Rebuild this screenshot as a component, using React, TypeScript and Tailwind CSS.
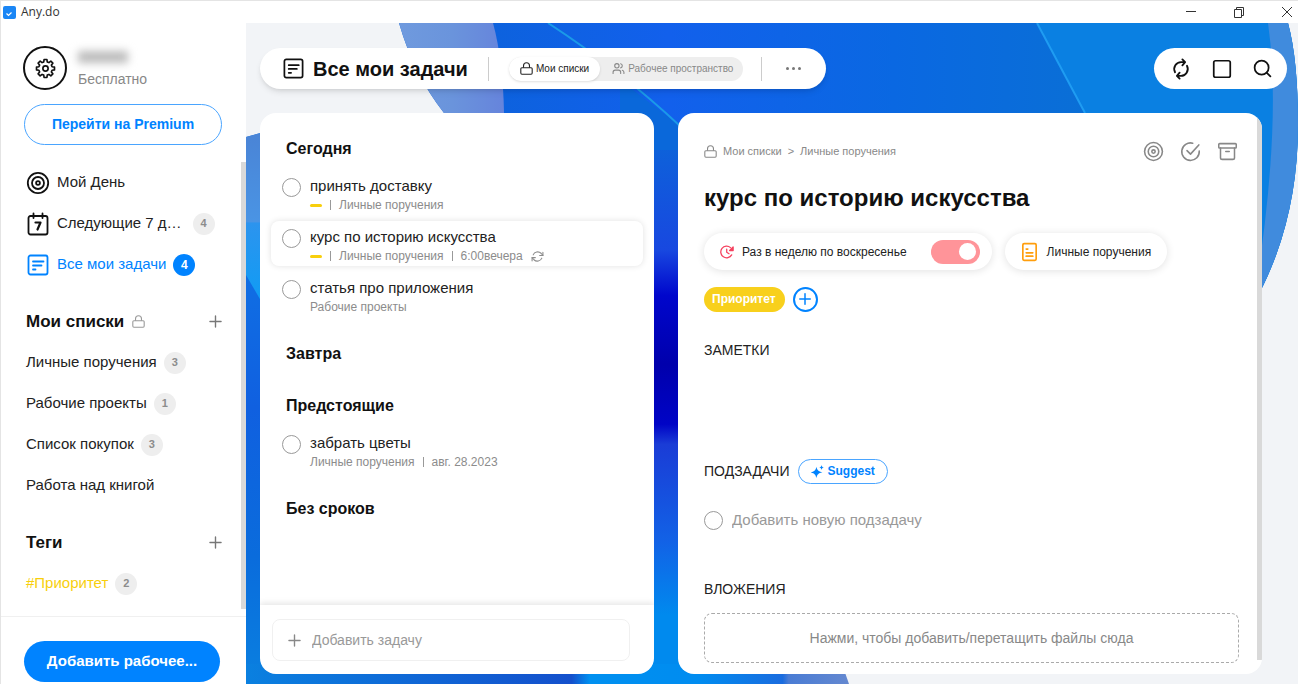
import React from "react";
import { Archive, Plus, Search, Square, Users } from "lucide-react";

type IconProps = { className?: string };

const gearOutline = Array.from({ length: 8 }, (_, tooth) => {
  const point = (radius: number, degrees: number) => {
    const angle = ((tooth * 45 + degrees) * Math.PI) / 180;
    return (12 + radius * Math.sin(angle)).toFixed(2) + "," + (12 - radius * Math.cos(angle)).toFixed(2);
  };
  return [point(7.8, -15), point(10.4, -9), point(10.4, 9), point(7.8, 15)].join(" ");
}).join(" ");

function GearIcon({ className }: IconProps) {
  return (
    <svg viewBox="0 0 24 24" className={className} fill="none" stroke="currentColor" strokeWidth="1.9" strokeLinejoin="round" aria-hidden="true">
      <polygon points={gearOutline} />
      <circle cx="12" cy="12" r="3" />
    </svg>
  );
}

function TargetIcon({ className }: IconProps) {
  return (
    <svg viewBox="0 0 24 24" className={className} fill="none" stroke="currentColor" strokeWidth="1.8" aria-hidden="true">
      <circle cx="12" cy="12" r="10.2" />
      <circle cx="12" cy="12" r="6" />
      <circle cx="12" cy="12" r="1.9" />
    </svg>
  );
}

function NoteIcon({ className }: IconProps) {
  return (
    <svg viewBox="0 0 24 24" className={className} fill="none" stroke="currentColor" strokeWidth="1.8" strokeLinecap="round" aria-hidden="true">
      <rect x="2.5" y="2.5" width="19" height="19" rx="2" />
      <path d="M7 8.500h10.500M7 12.500h8.500M7 16.500h2.500" />
    </svg>
  );
}

function SevenDaysIcon({ className }: IconProps) {
  return (
    <svg viewBox="0 0 24 24" className={className} fill="none" stroke="currentColor" strokeWidth="1.8" strokeLinecap="round" strokeLinejoin="round" aria-hidden="true">
      <rect x="2.5" y="4" width="19" height="18.5" rx="2" />
      <path d="M7.500 1.500v4.500M16.500 1.500v4.500" />
      <path d="M9.500 10.500h5l-3 7" strokeWidth="2.2" />
    </svg>
  );
}

function LockIcon({ className }: IconProps) {
  return (
    <svg viewBox="0 0 24 24" className={className} fill="none" stroke="currentColor" strokeWidth="2" strokeLinejoin="round" aria-hidden="true">
      <rect x="1.500" y="10.500" width="21" height="12" rx="2" />
      <path d="M6.500 10.500V7a5.500 5.500 0 0 1 11 0v3.500" />
    </svg>
  );
}

function SyncIcon({ className }: IconProps) {
  return (
    <svg viewBox="0 0 24 24" className={className} fill="none" stroke="currentColor" strokeWidth="2" strokeLinecap="round" strokeLinejoin="round" aria-hidden="true">
      <path d="M16 4.500h-3.500A7.500 7.500 0 0 0 5.500 15.500M13.500 1.500l3 3-3 3.500" />
      <path d="M8 19.500h3.500A7.500 7.500 0 0 0 18.500 8.500M10.500 22.500l-3-3 3-3.500" />
    </svg>
  );
}

function RepeatIcon({ className }: IconProps) {
  return (
    <svg viewBox="0 0 24 24" className={className} fill="none" stroke="currentColor" strokeWidth="2" strokeLinecap="round" strokeLinejoin="round" aria-hidden="true">
      <path d="M22 4v6h-6M2 20v-6h6" />
      <path d="M4 9a9 9 0 0 1 14.500-3L22 10M2 14l3.500 4A9 9 0 0 0 20 15" />
    </svg>
  );
}

function CheckCircleIcon({ className }: IconProps) {
  return (
    <svg viewBox="0 0 24 24" className={className} fill="none" stroke="currentColor" strokeWidth="1.8" strokeLinecap="round" strokeLinejoin="round" aria-hidden="true">
      <path d="M14.500 2.500A10 10 0 1 0 22 11.500" />
      <path d="m8 11 4 4L21.500 4.500" />
    </svg>
  );
}

function ReminderIcon({ className }: IconProps) {
  return (
    <svg viewBox="0 0 24 24" className={className} fill="none" stroke="currentColor" strokeWidth="2.200" strokeLinecap="round" strokeLinejoin="round" aria-hidden="true">
      <path d="M18 4.500A10 10 0 1 0 20 17" />
      <path d="M22.500 3.500v6h-6z" fill="currentColor" />
      <path d="M11.500 7v5.500l4 2.500" />
    </svg>
  );
}

function SheetIcon({ className }: IconProps) {
  return (
    <svg viewBox="0 0 20 24" className={className} fill="none" stroke="currentColor" strokeWidth="2" strokeLinecap="round" aria-hidden="true">
      <rect x="2" y="2" width="16" height="20" rx="1.500" />
      <path d="M6 8.500h2M6 13h8M6 17h8" />
    </svg>
  );
}

function SparkleIcon({ className }: IconProps) {
  return (
    <svg viewBox="0 0 24 24" className={className} fill="currentColor" aria-hidden="true">
      <path d="M10 3c1.500 6.500 3.500 8.500 11 10.500-7.500 2-9.500 4-11 10.500C8.500 17.500 6.500 15.500-1 13.500 6.500 11.500 8.500 9.500 10 3z" />
      <path d="M19.500 0c.5 3 1.500 4 4.500 4.500-3 .5-4 1.500-4.500 4.500-.5-3-1.500-4-4.500-4.500 3-.5 4-1.500 4.500-4.500z" />
    </svg>
  );
}

function Wallpaper() {
  return (
    <svg viewBox="246 23 1052 661" preserveAspectRatio="none" className="absolute inset-0 h-full w-full" aria-hidden="true">
      <defs>
        <linearGradient id="top" x1="399" x2="1298" y1="0" y2="0" gradientUnits="userSpaceOnUse">
          <stop offset="0" stopColor="#0a63d6" />
          <stop offset=".3" stopColor="#1260ec" />
          <stop offset=".55" stopColor="#0a68e2" />
          <stop offset=".8" stopColor="#0a70d4" />
        </linearGradient>
        <linearGradient id="gap" x1="0" x2="0" y1="113" y2="684" gradientUnits="userSpaceOnUse">
          <stop offset="0" stopColor="#0a6ad8" />
          <stop offset=".24" stopColor="#1848e0" />
          <stop offset=".32" stopColor="#0006cc" />
          <stop offset=".44" stopColor="#0000ac" />
          <stop offset=".545" stopColor="#0004c6" />
          <stop offset=".58" stopColor="#1a3cd6" />
          <stop offset=".75" stopColor="#1262e6" />
          <stop offset=".88" stopColor="#008aee" />
        </linearGradient>
        <linearGradient id="left" x1="0" x2="0" y1="260" y2="684" gradientUnits="userSpaceOnUse">
          <stop offset="0" stopColor="#1070e4" />
          <stop offset=".35" stopColor="#1060e0" />
          <stop offset=".7" stopColor="#0a6cdc" />
          <stop offset="1" stopColor="#0a80e0" />
        </linearGradient>
        <linearGradient id="arc" x1="0" x2="0" y1="133" y2="300" gradientUnits="userSpaceOnUse">
          <stop offset="0" stopColor="#4a84d6" />
          <stop offset=".53" stopColor="#4a94e4" />
          <stop offset=".54" stopColor="#2c94ee" />
          <stop offset="1" stopColor="#109cf4" />
        </linearGradient>
        <linearGradient id="bottom" x1="246" x2="849" y1="0" y2="0" gradientUnits="userSpaceOnUse">
          <stop offset="0" stopColor="#0a80e0" />
          <stop offset=".54" stopColor="#1450cc" />
          <stop offset=".57" stopColor="#0090f0" />
          <stop offset=".75" stopColor="#008cf0" />
          <stop offset=".89" stopColor="#1a6cdf" />
          <stop offset=".9" stopColor="#4a7cd4" />
          <stop offset="1" stopColor="#6488d0" />
        </linearGradient>
        <linearGradient id="haze" x1="399" x2="504" y1="0" y2="0" gradientUnits="userSpaceOnUse">
          <stop offset="0" stopColor="#6f9ade" />
          <stop offset=".5" stopColor="#6a94dc" />
          <stop offset="1" stopColor="#6684dc" />
        </linearGradient>
      </defs>
      <rect x="246" y="23" width="1052" height="661" fill="#f2f4f7" />
      <path d="M399 23Q414 75 444 113L480 200H1280L1262 288Q1298 215 1298 125Q1298 60 1288 23z" fill="url(#top)" />
      <path d="M399 23Q414 75 444 113H504Q503 60 493 23z" fill="url(#haze)" />
      <path d="M1037 23 1085 113 1100 288H1262Q1298 215 1298 125Q1298 60 1288 23z" fill="#0a80e2" />
      <path d="M1268 23Q1282 120 1256 288H1262Q1298 215 1298 125Q1298 60 1288 23z" fill="#408bdd" />
      <rect x="640" y="127" width="60" height="557" fill="url(#gap)" />
      <path d="M620 80 680 126V150H620z" fill="#0a68da" />
      <path d="M548 23Q620 70 680 126" fill="none" stroke="#1a9ae8" strokeWidth="2" />
      <path d="M1037 23 1085 113" fill="none" stroke="#1f9cf2" strokeWidth="2" />
      <path d="M246 137 275 129V684H246z" fill="url(#left)" />
      <path d="M246 137 275 129V325L246 275z" fill="url(#arc)" />
      <path d="M246 664H842L849 684H246z" fill="url(#bottom)" />
    </svg>
  );
}

function Badge({ value, active }: { value: number; active?: boolean }) {
  return (
    <span
      className={
        active
          ? "flex size-[22px] shrink-0 items-center justify-center rounded-full bg-[#0083ff] text-xs font-bold text-white"
          : "flex size-[22px] shrink-0 items-center justify-center rounded-full bg-[#eeeeee] text-[11px] font-bold text-[#8c8c8c]"
      }
    >
      {value}
    </span>
  );
}

const lists = [
  { name: "Личные поручения", count: 3 },
  { name: "Рабочие проекты", count: 1 },
  { name: "Список покупок", count: 3 },
  { name: "Работа над книгой", count: 0 },
];

function SectionTitle({ title, locked }: { title: string; locked?: boolean }) {
  return (
    <div className="flex h-[41px] items-center pr-4">
      <h2 className="text-[17px] font-bold text-[#111]">{title}</h2>
      {locked && <LockIcon className="ml-2 size-[13px] text-[#999]" />}
      <button type="button" aria-label={"Добавить: " + title} className="ml-auto text-[#777]">
        <Plus size={19} strokeWidth={1.75} />
      </button>
    </div>
  );
}

function Sidebar() {
  return (
    <aside className="flex w-[245px] shrink-0 flex-col bg-white">
      <div className="flex items-center gap-[11px] pt-[23px] pl-[22px]">
        <button type="button" aria-label="Настройки" className="flex size-11 items-center justify-center rounded-full border-2 border-[#111] text-[#111]">
          <GearIcon className="size-[21px]" />
        </button>
        <div className="flex flex-col gap-1">
          <span className="flex h-[18px] w-[50px] items-center blur-[4px]">
            <span className="h-3 w-full bg-[#bbb]" />
          </span>
          <span className="text-sm leading-[18px] text-[#888]">Бесплатно</span>
        </div>
      </div>
      <button type="button" className="mt-[14px] mr-6 ml-[23px] h-[41px] shrink-0 rounded-full border border-[#4aa5ff] text-[14px] font-bold text-[#0083ff]">
        Перейти на Premium
      </button>
      <div className="mt-[17px] flex flex-1 flex-col">
        <div className="flex min-h-[447px]">
          <div className="flex min-w-0 flex-1 flex-col pl-[25px]">
            <nav className="flex flex-col">
              <a href="#day" className="flex h-[41px] items-center gap-[7px] text-[15px] text-[#222]">
                <TargetIcon className="size-6 shrink-0 text-[#111]" />
                Мой День
              </a>
              <a href="#week" className="flex h-[41px] items-center gap-[7px] text-[15px] text-[#222]">
                <SevenDaysIcon className="size-6 shrink-0 text-[#111]" />
                Следующие 7 д…
                <span className="ml-1">
                  <Badge value={4} />
                </span>
              </a>
              <a href="#all" className="flex h-[41px] items-center gap-[7px] text-[15px] text-[#0083ff]">
                <NoteIcon className="size-6 shrink-0" />
                Все мои задачи
                <Badge value={4} active />
              </a>
            </nav>
            <div className="mt-4">
              <SectionTitle title="Мои списки" locked />
              {lists.map((list) => (
                <a key={list.name} href="#list" className="flex h-[41px] items-center gap-[7px] text-[15px] text-[#222]">
                  {list.name}
                  {list.count > 0 && <Badge value={list.count} />}
                </a>
              ))}
            </div>
            <div className="mt-4">
              <SectionTitle title="Теги" />
              <a href="#tag" className="flex h-[41px] items-center gap-[7px] text-[15px] text-[#f8cf0c]">
                #Приоритет
                <Badge value={2} />
              </a>
            </div>
          </div>
          <div className="w-[5px] bg-[#d9d9d9]" />
        </div>
      </div>
      <div className="border-t border-[#f0f0f0] pt-6 pr-[26px] pb-[2px] pl-[23px]">
        <button type="button" className="h-[41px] w-full rounded-full bg-[#0083ff] text-[15px] font-bold text-white">
          Добавить рабочее...
        </button>
      </div>
    </aside>
  );
}

function Header() {
  return (
    <header className="flex items-center justify-between pr-[11px] pl-[14px]">
      <div className="flex h-[41px] items-center rounded-full bg-white pr-[25px] pl-[22px] shadow-md">
        <NoteIcon className="size-[23px] text-[#111]" />
        <h1 className="ml-2 text-xl font-bold text-[#111]">Все мои задачи</h1>
        <span className="mx-5 h-6 w-px bg-[#ccc]" />
        <div className="flex h-6 items-center rounded-full bg-[#eeeeee]">
          <button type="button" className="flex h-6 items-center gap-[3px] rounded-full bg-white px-[11px] text-[10px] text-[#222] shadow">
            <LockIcon className="size-[13px]" />
            Мои списки
          </button>
          <button type="button" className="flex h-6 items-center gap-[3px] pr-[10px] pl-3 text-[10px] text-[#888]">
            <Users size={13} />
            Рабочее пространство
          </button>
        </div>
        <span className="mr-6 ml-[18px] h-6 w-px bg-[#ccc]" />
        <button type="button" aria-label="Ещё" className="flex h-6 items-center gap-[3px]">
          <span className="size-[3px] rounded-full bg-[#777]" />
          <span className="size-[3px] rounded-full bg-[#777]" />
          <span className="size-[3px] rounded-full bg-[#777]" />
        </button>
      </div>
      <div className="flex h-[41px] items-center gap-[19px] rounded-full bg-white pr-[14px] pl-4 text-[#111]">
        <button type="button" aria-label="Синхронизация">
          <SyncIcon className="size-[22px]" />
        </button>
        <button type="button" aria-label="Панель">
          <Square size={22} strokeWidth={1.9} />
        </button>
        <button type="button" aria-label="Поиск">
          <Search size={21} strokeWidth={2} />
        </button>
      </div>
    </header>
  );
}

type Task = { title: string; list: string; flagged?: boolean; extra?: string; repeat?: boolean; selected?: boolean };

function Bar() {
  return <span className="h-[10px] w-px bg-[#999]" />;
}

function TaskRow({ task }: { task: Task }) {
  return (
    <label
      className={
        task.selected
          ? "mx-[11px] mt-[2px] mb-1 flex h-[45px] gap-[9px] rounded-lg bg-white pl-[11px] shadow-[0_0_6px_rgba(0,0,0,0.12)]"
          : "mx-[11px] flex h-[51px] gap-[9px] pt-[2px] pl-[11px]"
      }
    >
      <input type="checkbox" className="mt-2 size-[19px] shrink-0 appearance-none rounded-full border border-[#999] bg-white" />
      <span className="flex flex-col pt-[6px]">
        <span className="text-[15px] leading-5 text-[#222]">{task.title}</span>
        <span className="flex items-center gap-2 text-xs leading-[18px] text-[#8c8c8c]">
          {task.flagged && (
            <>
              <span className="h-[3px] w-3 rounded-full bg-[#f8cf0c]" />
              <Bar />
            </>
          )}
          {task.list}
          {task.extra && (
            <>
              <Bar />
              {task.extra}
            </>
          )}
          {task.repeat && <RepeatIcon className="size-[13px]" />}
        </span>
      </span>
    </label>
  );
}

const groups: { title: string; tasks: Task[] }[] = [
  {
    title: "Сегодня",
    tasks: [
      { title: "принять доставку", list: "Личные поручения", flagged: true },
      { title: "курс по историю искусства", list: "Личные поручения", flagged: true, extra: "6:00вечера", repeat: true, selected: true },
      { title: "статья про приложения", list: "Рабочие проекты" },
    ],
  },
  { title: "Завтра", tasks: [] },
  { title: "Предстоящие", tasks: [{ title: "забрать цветы", list: "Личные поручения", extra: "авг. 28.2023" }] },
  { title: "Без сроков", tasks: [] },
];

function TaskPanel() {
  return (
    <section className="flex min-w-0 flex-[394] flex-col overflow-hidden rounded-[16px] bg-white">
      <div className="flex-1 pt-[17px]">
        {groups.map((group) => (
          <div key={group.title} className="pb-[14px]">
            <h2 className="flex h-[38px] items-center pl-[26px] text-base font-bold text-[#111]">{group.title}</h2>
            {group.tasks.map((task) => (
              <TaskRow key={task.title} task={task} />
            ))}
          </div>
        ))}
      </div>
      <div className="pt-[14px] pr-6 pb-[13px] pl-3 shadow-[0_-2px_6px_rgba(0,0,0,0.1)]">
        <label className="flex h-[42px] items-center gap-2 rounded-lg border border-[#f0f0f0] px-3 text-[#888]">
          <Plus size={19} strokeWidth={1.75} />
          <input type="text" aria-label="Добавить задачу" placeholder="Добавить задачу" className="min-w-0 flex-1 bg-transparent text-[14px] outline-none placeholder:text-[#999]" />
        </label>
      </div>
    </section>
  );
}

function DetailPanel() {
  return (
    <section className="flex min-w-0 flex-[584] overflow-hidden rounded-[16px] bg-white">
      <div className="flex min-w-0 flex-1 flex-col pt-[26px] pr-[18px] pb-[11px] pl-[26px]">
        <div className="flex h-6 items-center pr-px text-[#888]">
          <nav className="flex items-center gap-[6px] text-[11px]">
            <LockIcon className="size-[13px]" />
            <a href="#lists">Мои списки</a>
            <span>&gt;</span>
            <a href="#personal">Личные поручения</a>
          </nav>
          <div className="ml-auto flex items-center gap-4">
            <button type="button" aria-label="Фокус">
              <TargetIcon className="size-[21px]" />
            </button>
            <button type="button" aria-label="Завершить">
              <CheckCircleIcon className="size-[21px]" />
            </button>
            <button type="button" aria-label="Архивировать">
              <Archive size={21} strokeWidth={1.75} />
            </button>
          </div>
        </div>
        <h2 className="mt-5 text-2xl leading-[30px] font-bold text-[#111]">курс по историю искусства</h2>
        <div className="mt-5 flex gap-[13px]">
          <label className="flex h-[37px] items-center rounded-full bg-white pr-3 pl-4 text-xs text-[#222] shadow-[0_1px_8px_rgba(0,0,0,0.12)]">
            <ReminderIcon className="mr-2 size-[14px] text-[#f5425f]" />
            Раз в неделю по воскресенье
            <input
              type="checkbox"
              defaultChecked
              className="ml-6 flex h-6 w-[49px] appearance-none items-center justify-end rounded-full bg-[#ff9499] pr-1 before:h-[17px] before:w-[17px] before:rounded-full before:bg-white before:content-['']"
            />
          </label>
          <button type="button" className="flex h-[37px] items-center gap-[9px] rounded-full bg-white px-4 text-xs text-[#222] shadow-[0_1px_8px_rgba(0,0,0,0.12)]">
            <SheetIcon className="h-5 w-[17px] text-[#ff9e0d]" />
            Личные поручения
          </button>
        </div>
        <div className="mt-4 flex h-[26px] items-center gap-2">
          <span className="flex h-[25px] items-center rounded-full bg-[#f8d01c] pr-[9px] pl-2 text-xs font-bold text-white">Приоритет</span>
          <button type="button" aria-label="Добавить тег" className="flex size-[25px] items-center justify-center rounded-full border-2 border-[#0083ff] text-[#0083ff]">
            <Plus size={18} strokeWidth={2} />
          </button>
        </div>
        <label htmlFor="notes" className="mt-7 text-[14px] leading-5 text-[#222]">
          ЗАМЕТКИ
        </label>
        <textarea id="notes" className="min-h-[98px] flex-1 resize-none outline-none" />
        <div className="flex h-[26px] items-center gap-2">
          <h3 className="text-[14px] text-[#222]">ПОДЗАДАЧИ</h3>
          <button type="button" className="flex h-[25px] items-center gap-1 rounded-full border border-[#4aa5ff] px-3 text-xs font-bold text-[#0083ff]">
            <SparkleIcon className="size-[13px]" />
            Suggest
          </button>
        </div>
        <div className="mt-6 flex h-6 items-center gap-[9px]">
          <input type="checkbox" aria-label="Подзадача выполнена" className="size-[19px] shrink-0 appearance-none rounded-full border border-[#999]" />
          <input type="text" aria-label="Добавить новую подзадачу" placeholder="Добавить новую подзадачу" className="min-w-0 flex-1 bg-transparent text-[15px] outline-none placeholder:text-[#999]" />
        </div>
        <h3 className="mt-[47px] text-[14px] leading-5 text-[#222]">ВЛОЖЕНИЯ</h3>
        <button type="button" className="mt-[14px] h-[50px] shrink-0 rounded-lg border border-dashed border-[#aaa] text-[14px] text-[#888]">
          Нажми, чтобы добавить/перетащить файлы сюда
        </button>
      </div>
      <div className="mb-[14px] w-[5px] shrink-0 bg-[#d9d9d9]" />
    </section>
  );
}

export default function App() {
  return (
    <div className="flex min-h-screen flex-col border-t border-l border-[#e4e4e4] bg-white font-['Liberation_Sans',Arial,sans-serif]">
      <div className="flex h-[22px] shrink-0 items-center gap-[5px] pl-[2px] text-[#333]">
        <span className="flex size-[13px] items-center justify-center rounded-[2px] bg-[#1a86f5] text-white">
          <svg viewBox="0 0 12 12" className="size-3" fill="none" stroke="currentColor" strokeWidth="1.200" aria-hidden="true">
            <path d="m2.500 7.500 2 2 3-3" />
          </svg>
        </span>
        <span className="font-['Open_Sans','Noto_Sans',sans-serif] text-xs">Any.do</span>
        <div className="ml-auto flex items-center gap-9 pr-[5px]">
          <button type="button" aria-label="Свернуть">
            <svg viewBox="0 0 12 12" className="size-3" stroke="currentColor" aria-hidden="true">
              <path d="M1 5.500h10" />
            </svg>
          </button>
          <button type="button" aria-label="Восстановить">
            <svg viewBox="0 0 12 12" className="size-3" fill="none" stroke="currentColor" aria-hidden="true">
              <path d="M1.500 3.500h7v8h-7zM3.500 3.500v-2h7v8h-2" />
            </svg>
          </button>
          <button type="button" aria-label="Закрыть">
            <svg viewBox="0 0 12 12" className="size-3" stroke="currentColor" aria-hidden="true">
              <path d="m1 1 10 10M11 1 1 11" />
            </svg>
          </button>
        </div>
      </div>
      <div className="flex flex-1">
        <Sidebar />
        <main className="relative flex min-w-0 flex-1 flex-col">
          <Wallpaper />
          <div className="relative flex flex-1 flex-col pt-[25px] pb-[10px]">
            <Header />
            <div className="mt-6 flex flex-1 gap-6 pr-9 pl-[14px]">
              <TaskPanel />
              <DetailPanel />
            </div>
          </div>
        </main>
      </div>
    </div>
  );
}
